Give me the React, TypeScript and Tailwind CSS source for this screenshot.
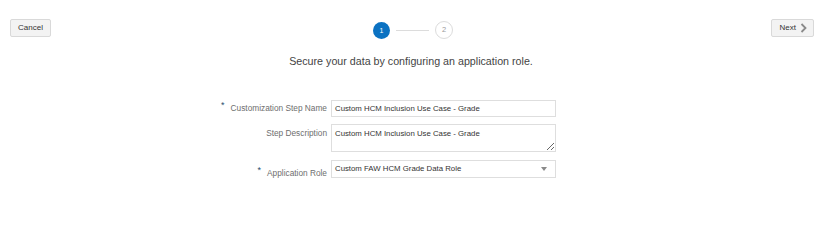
import React from "react";

const font = { fontFamily: '"Liberation Sans", Arial, sans-serif' };

function Field({
  label,
  required,
  top,
  children,
}: {
  label: string;
  required?: boolean;
  top?: boolean;
  children: React.ReactNode;
}) {
  return (
    <>
      <div
        className={
          "flex justify-end gap-[6px] text-[8.3px] text-[#6e6e6e] " +
          (top ? "items-start pt-[3px]" : "items-center")
        }
      >
        {required && <span className="text-[#2b4a6b] -mt-[5px] text-[9px]">*</span>}
        <span>{label}</span>
      </div>
      {children}
    </>
  );
}

export default function App() {
  return (
    <div className="w-[822px] h-[235px] bg-white text-[#333]" style={font}>
      {/* Top bar */}
      <div className="grid grid-cols-[1fr_auto_1fr] items-start pl-[10px] pr-[8px] pt-[19px] leading-none">
        <div className="flex">
          <button className="flex items-center h-[18px] px-[7px] rounded-[2px] border border-[#d9d9d9] bg-[#f3f3f3] text-[8px] text-[#333]">
            Cancel
          </button>
        </div>

        <div className="flex items-center mt-[2px] ml-[2px]">
          <div className="flex items-center justify-center w-[17px] h-[17px] rounded-full bg-[#0b72c2] text-white text-[7px]">
            1
          </div>
          <div className="w-[33px] h-px bg-[#dcdcdc] mx-[6px]" />
          <div className="flex items-center justify-center w-[18px] h-[18px] rounded-full border border-[#dcdcdc] text-[#9a9a9a] text-[7.5px]">
            2
          </div>
        </div>

        <div className="flex justify-end">
          <button className="flex items-center gap-[4px] h-[18px] pl-[8px] pr-[6px] rounded-[2px] border border-[#d9d9d9] bg-[#f3f3f3] text-[8px] text-[#333]">
            Next
            <svg width="7" height="10" viewBox="0 0 7 10">
              <path d="M1.5 1 L5.5 5 L1.5 9" fill="none" stroke="#8a8a8a" strokeWidth="1.8" />
            </svg>
          </button>
        </div>
      </div>

      {/* Heading */}
      <p className="mt-[14px] text-center text-[10.7px] text-[#444]">
        Secure your data by configuring an application role.
      </p>

      {/* Form */}
      <div className="mt-[31px] grid grid-cols-[327px_225px] gap-x-[4px] gap-y-[7px]">
        <Field label="Customization Step Name" required>
          <div className="h-[17px] border border-[#dedede] flex items-center px-[3px] text-[7.8px] text-[#333]">
            Custom HCM Inclusion Use Case - Grade
          </div>
        </Field>

        <Field label="Step Description" top>
          <textarea
            readOnly
            defaultValue="Custom HCM Inclusion Use Case - Grade"
            className="h-[28px] border border-[#dedede] px-[3px] pt-[4px] text-[7.8px] text-[#333] leading-[10px] outline-none"
            style={font}
          />
        </Field>

        <div className="col-span-2 h-px" />

        <Field label="Application Role" required>
          <div className="h-[18px] -mt-[7px] border border-[#dedede] flex items-center justify-between px-[3px] text-[7.8px] text-[#333]">
            <span>Custom FAW HCM Grade Data Role</span>
            <svg width="6" height="4" viewBox="0 0 6 4" className="mr-[5px]">
              <path d="M0 0 H6 L3 4 Z" fill="#8a8a8a" />
            </svg>
          </div>
        </Field>
      </div>
    </div>
  );
}
